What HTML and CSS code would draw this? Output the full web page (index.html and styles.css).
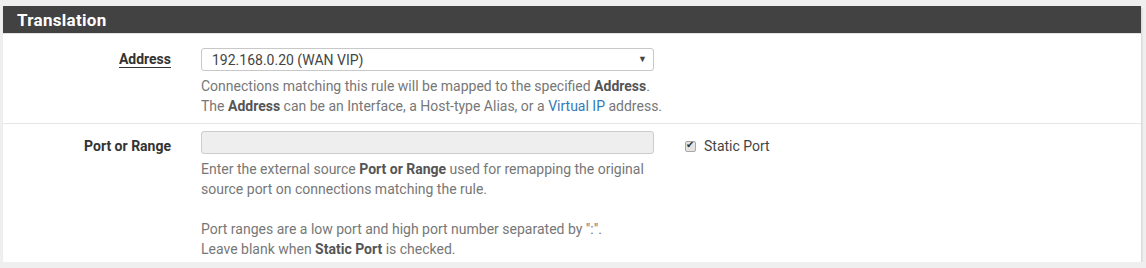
FILE: index.html
```html
<!DOCTYPE html>
<html lang="en">
<head>
    <meta charset="UTF-8">
    <title>Translation</title>
    <link rel="stylesheet" href="styles.css">
</head>
<body>

<div class="panel">
    <div class="panel-heading">
        <h2>Translation</h2>
    </div>
    <div class="panel-body">
        <div class="form-row">
            <label class="row-label" for="target"><span class="under">Address</span></label>
            <div class="field">
                <div class="select-wrap">
                    <select id="target">
                        <option>192.168.0.20 (WAN VIP)</option>
                    </select>
                </div>
                <p class="help">Connections matching this rule will be mapped to the specified <b>Address</b>.<br>
                The <b>Address</b> can be an Interface, a Host-type Alias, or a <a href="#">Virtual IP</a> address.</p>
            </div>
            <div></div>
        </div>
        <div class="form-row last">
            <label class="row-label" for="natport">Port or Range</label>
            <div class="field">
                <input type="text" id="natport" disabled>
                <p class="help">Enter the external source <b>Port or Range</b> used for remapping the original<br>
                source port on connections matching the rule.<br><br>
                Port ranges are a low port and high port number separated by ":".<br>
                Leave blank when <b>Static Port</b> is checked.</p>
            </div>
            <div class="check">
                <input type="checkbox" id="staticnatport" checked>
                <label for="staticnatport">Static Port</label>
            </div>
        </div>
    </div>
</div>

</body>
</html>
```

FILE: styles.css
```css
body {
    font-family: Roboto, "Liberation Sans", Arial, sans-serif;
    font-size: 14px;
    color: #333;
    background-color: #efefef;
    margin: 0;
    padding: 6px 5px 0 3px;
}
.panel {
    background: #fff;
    box-shadow: 1px 2px 2px rgba(0, 0, 0, 0.13);
}
.panel-heading {
    background-color: #424242;
    height: 27px;
    padding: 0 14px;
    border-bottom: 1px solid #e2e2e2;
    display: flex;
    align-items: center;
}
.panel-heading h2 {
    margin: 0;
    color: #fff;
    font-size: 17px;
    font-weight: bold;
    letter-spacing: 0.3px;
}
.panel-body {
    padding-top: 7px;
}
.form-row {
    display: grid;
    grid-template-columns: 168px 453px 1fr;
    column-gap: 30px;
    padding: 7px 0;
    border-bottom: 1px solid #e6e6e6;
}
.form-row.last {
    border-bottom: none;
    padding-bottom: 3px;
}
.row-label {
    text-align: right;
    font-weight: bold;
    line-height: 23px;
}
.form-row.last .row-label {
    line-height: 30px;
}
.under {
    border-bottom: 1px solid #333;
}
.select-wrap {
    position: relative;
}
.select-wrap::after {
    content: "\25BC";
    position: absolute;
    right: 7px;
    top: 6px;
    font-size: 9px;
    color: #444;
    pointer-events: none;
}
select {
    appearance: none;
    width: 100%;
    height: 23px;
    padding: 0 10px;
    font-family: inherit;
    font-size: 14px;
    color: #444;
    background: #fff;
    border: 1px solid #c8c8c8;
    border-radius: 3px;
}
input[type="text"] {
    box-sizing: border-box;
    width: 100%;
    height: 23px;
    background: #eee;
    border: 1px solid #ccc;
    border-radius: 3px;
    margin: 0;
    display: block;
}
.help {
    margin: 5px 0 0;
    line-height: 20px;
    color: #777;
    white-space: nowrap;
}
.help b {
    color: #555;
}
.help a {
    color: #337ab7;
    text-decoration: none;
}
.check {
    display: flex;
    align-items: center;
    height: 30px;
    padding-left: 1px;
    color: #444;
}
.check input {
    appearance: none;
    margin: 0 8px 0 0;
    width: 11px;
    height: 11px;
    border: 1px solid #a8a8a8;
    border-radius: 2px;
    background: #e4e4e4;
    position: relative;
}
.check input:checked::after {
    content: "\2714";
    position: absolute;
    left: 0;
    top: -3px;
    font-size: 10px;
    color: #333;
}
```
